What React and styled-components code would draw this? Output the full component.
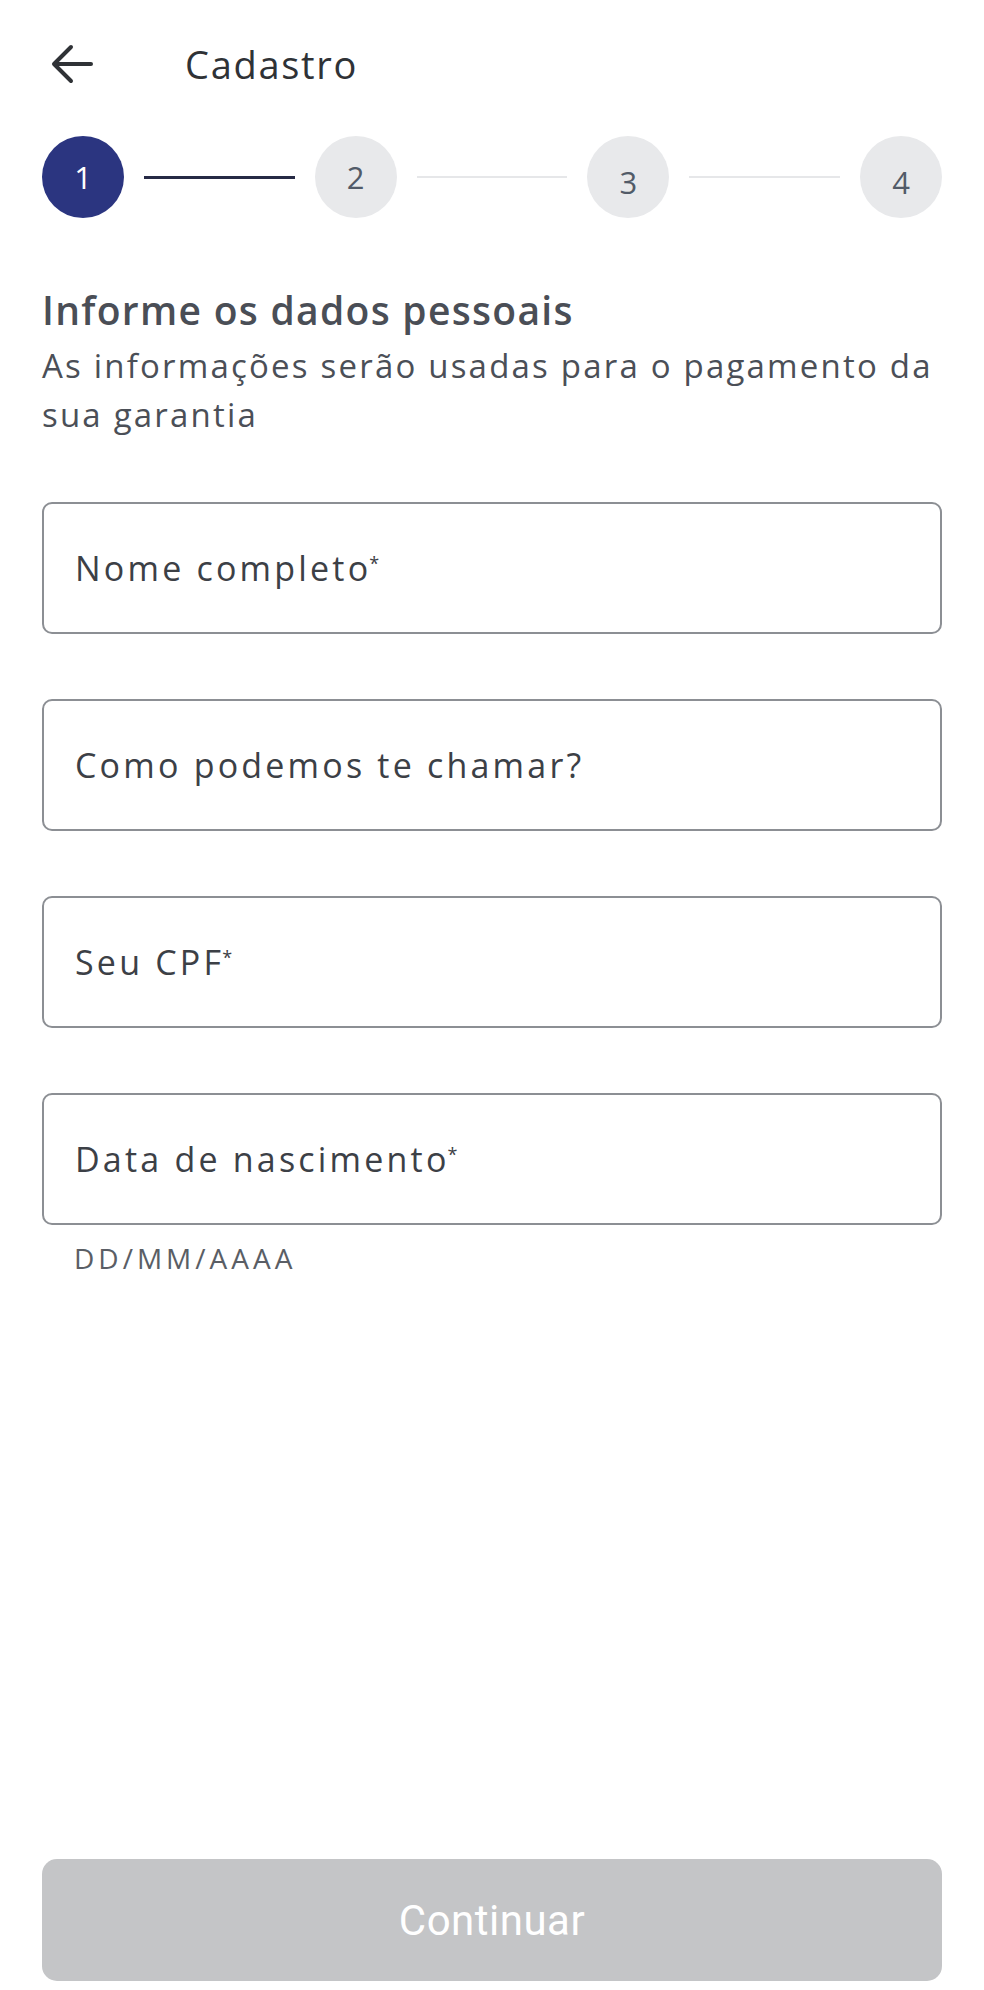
import React from 'react'
import styled, {createGlobalStyle} from "styled-components";

const GlobalStyle = createGlobalStyle`
    html, body {
        margin: 0;
        padding: 0;
        background: #ffffff;
    }
    body {
        font-family: "Open Sans", Lato, sans-serif;
    }
`

const Page = styled.div`
    box-sizing: border-box;
    width: 984px;
    height: 1990px;
    padding: 0 42px 9px 42px;
    display: flex;
    flex-direction: column;
`

const Header = styled.header`
    display: flex;
    align-items: center;
    height: 60px;
    margin-top: 34px;
`

const BackButton = styled.button`
    border: none;
    background: none;
    padding: 0;
    margin-left: 9px;
    display: flex;
    align-items: center;
    color: #2f3236;
`

const Title = styled.h1`
    margin: 0 0 0 92px;
    font-size: 38px;
    font-weight: 400;
    color: #2f3236;
    letter-spacing: 1.7px;
`

const Stepper = styled.div`
    display: flex;
    align-items: center;
    margin-top: 42px;
`

const Step = styled.div`
    flex: none;
    width: 82px;
    height: 82px;
    border-radius: 50%;
    display: flex;
    align-items: center;
    justify-content: center;
    font-size: 31px;
    background: ${p => p.active ? '#2b3580' : '#e8e9eb'};
    color: ${p => p.active ? '#ffffff' : '#525b68'};

    span {
        transform: translateY(${p => p.low ? '5px' : '0'});
    }
`

const Connector = styled.div`
    flex: 1;
    height: ${p => p.done ? '3px' : '2px'};
    margin: 0 20px;
    background: ${p => p.done ? '#262a45' : '#e6e7e9'};
`

const Heading = styled.h2`
    margin: 69px 0 0 0;
    font-size: 39px;
    line-height: 46px;
    font-weight: 600;
    color: #4a4e56;
    letter-spacing: 1.3px;
`

const Subtitle = styled.p`
    margin: 8px 0 0 0;
    font-size: 33px;
    line-height: 49px;
    color: #4b4f57;
    letter-spacing: 2.2px;
`

const Form = styled.div`
    display: flex;
    flex-direction: column;
    gap: 65px;
    margin-top: 63px;
`

const FieldWrap = styled.div`
    display: flex;
    flex-direction: column;
`

const Field = styled.label`
    box-sizing: border-box;
    height: 132px;
    border: 2px solid #8c8f94;
    border-radius: 10px;
    display: flex;
    align-items: center;
    padding-left: 31px;
    font-size: 34px;
    color: #3c4046;
    letter-spacing: 3.2px;
`

const Required = styled.sup`
    font-size: 18px;
    position: relative;
    top: -5px;
    margin-left: -2px;
`

const Helper = styled.span`
    margin: 16px 0 0 32px;
    font-size: 28px;
    line-height: 34px;
    color: #5a5e65;
    letter-spacing: 4px;
`

const SubmitButton = styled.button`
    margin-top: auto;
    height: 122px;
    border: none;
    border-radius: 15px;
    background: #c4c5c7;
    color: #ffffff;
    font-family: Roboto, "Noto Sans", sans-serif;
    font-size: 42px;
    letter-spacing: 0.5px;
`

const fields = [
    {label: 'Nome completo', required: true},
    {label: 'Como podemos te chamar?', required: false},
    {label: 'Seu CPF', required: true},
    {label: 'Data de nascimento', required: true, helper: 'DD/MM/AAAA'},
]

const steps = [1, 2, 3, 4]

const ArrowLeft = () => (
    <svg width="42" height="40" viewBox="0 0 42 40" fill="none" stroke="currentColor" strokeWidth="4" strokeLinecap="round" strokeLinejoin="round">
        <path d="M40 20H4" />
        <path d="M20 3L3 20l17 17" />
    </svg>
)

const App = () => {
    return (
        <Page>
            <GlobalStyle />
            <Header>
                <BackButton><ArrowLeft /></BackButton>
                <Title>Cadastro</Title>
            </Header>
            <Stepper>
                {steps.map((step, index) => (
                    <React.Fragment key={step}>
                        {index > 0 && <Connector done={index === 1} />}
                        <Step active={step === 1} low={step > 2}><span>{step}</span></Step>
                    </React.Fragment>
                ))}
            </Stepper>
            <Heading>Informe os dados pessoais</Heading>
            <Subtitle>As informações serão usadas para o pagamento da sua garantia</Subtitle>
            <Form>
                {fields.map((field, index) => (
                    <FieldWrap key={index}>
                        <Field>
                            {field.label}
                            {field.required && <Required>*</Required>}
                        </Field>
                        {field.helper && <Helper>{field.helper}</Helper>}
                    </FieldWrap>
                ))}
            </Form>
            <SubmitButton disabled>Continuar</SubmitButton>
        </Page>
    )
}

export default App
